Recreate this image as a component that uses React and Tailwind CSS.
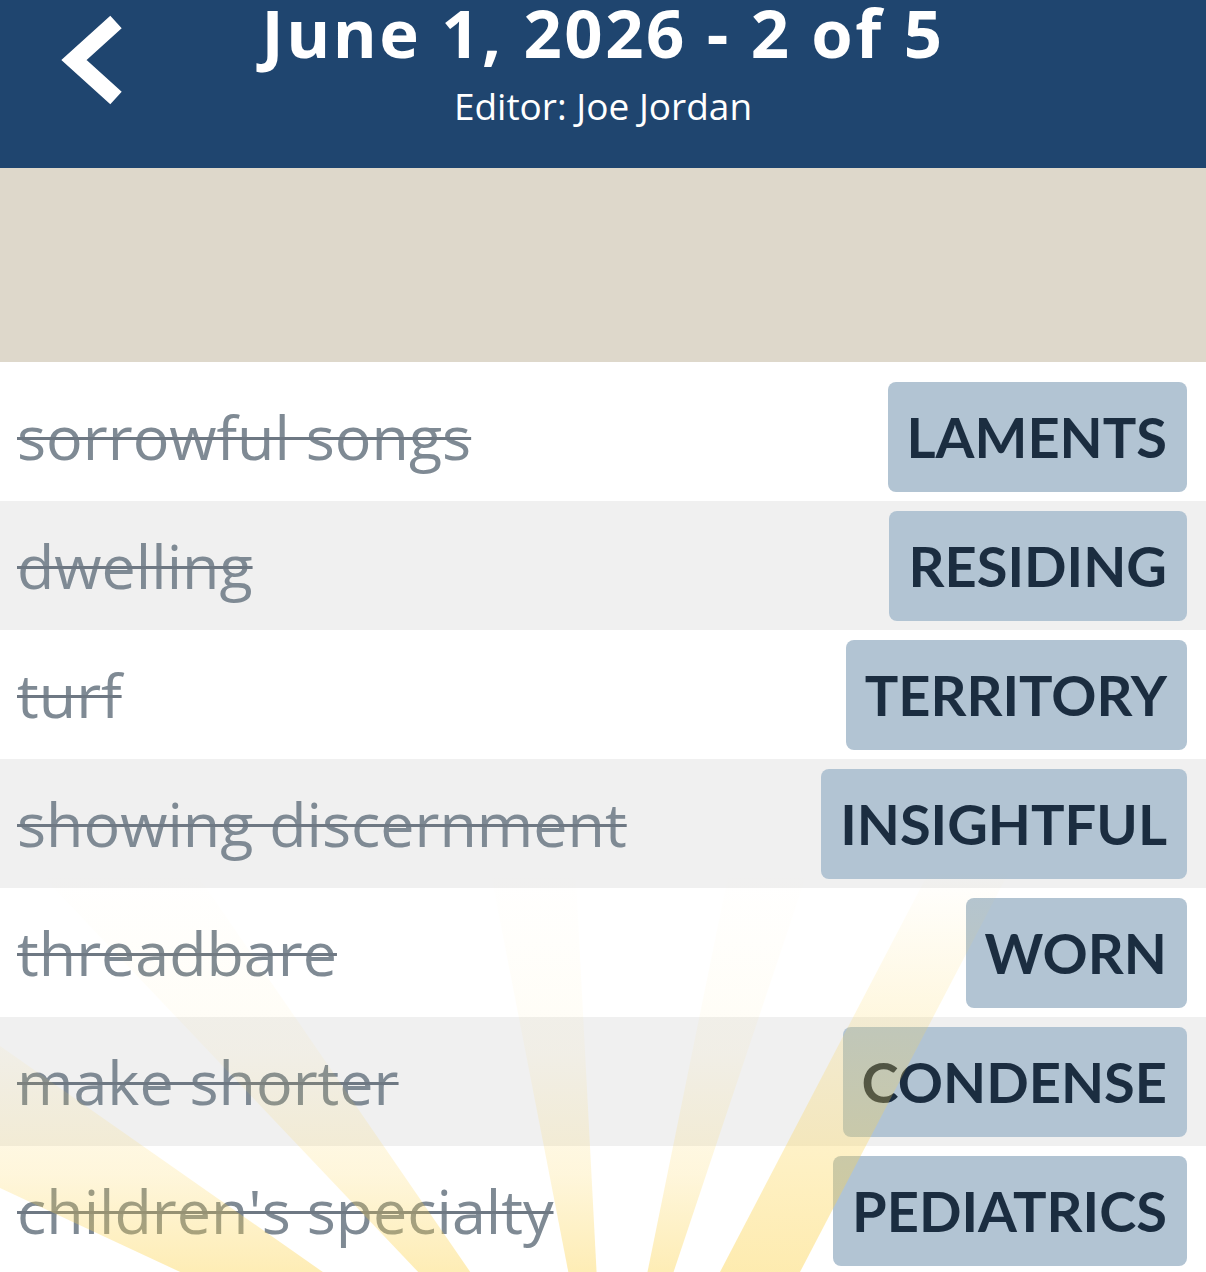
import React from 'react';

const clues = [
    { clue: 'sorrowful songs', answer: 'LAMENTS' },
    { clue: 'dwelling', answer: 'RESIDING' },
    { clue: 'turf', answer: 'TERRITORY' },
    { clue: 'showing discernment', answer: 'INSIGHTFUL' },
    { clue: 'threadbare', answer: 'WORN' },
    { clue: 'make shorter', answer: 'CONDENSE' },
    { clue: "children's specialty", answer: 'PEDIATRICS' },
];

// sun rays fanning up from a point below the list
const rays = [
    { angle: -60, spread: 5 },
    { angle: -39, spread: 4.5 },
    { angle: -7, spread: 4 },
    { angle: 15, spread: 3.5 },
];

function rayPoints(cx, cy, angle, spread) {
    const r = 1500;
    const a = ((angle - spread) * Math.PI) / 180;
    const b = ((angle + spread) * Math.PI) / 180;
    return `${cx},${cy} ${cx + r * Math.sin(a)},${cy - r * Math.cos(a)} ${cx + r * Math.sin(b)},${cy - r * Math.cos(b)}`;
}

function SunBurst() {
    const cx = 607;
    const cy = 1109;
    return (
        <svg className="absolute inset-0 w-full h-full pointer-events-none" viewBox="0 0 1206 913" preserveAspectRatio="none">
            <defs>
                <linearGradient id="rayFade" gradientUnits="userSpaceOnUse" x1="0" y1="510" x2="0" y2="913">
                    <stop offset="0" stopColor="#fcd34d" stopOpacity="0" />
                    <stop offset="0.45" stopColor="#fcd34d" stopOpacity="0.06" />
                    <stop offset="0.75" stopColor="#fcd34d" stopOpacity="0.2" />
                    <stop offset="1" stopColor="#fcd34d" stopOpacity="0.42" />
                </linearGradient>
                <linearGradient id="bigRayFade" gradientUnits="userSpaceOnUse" x1="0" y1="510" x2="0" y2="913">
                    <stop offset="0" stopColor="#fcd34d" stopOpacity="0" />
                    <stop offset="0.4" stopColor="#fcd34d" stopOpacity="0.2" />
                    <stop offset="1" stopColor="#fcd34d" stopOpacity="0.45" />
                </linearGradient>
            </defs>
            {rays.map((r, i) => (
                <polygon key={i} points={rayPoints(cx, cy, r.angle, r.spread)} fill="url(#rayFade)" />
            ))}
            <polygon points="930,508 1010,508 800,910 720,910" fill="url(#bigRayFade)" />
        </svg>
    );
}

function ClueRow({ clue, answer, shaded }) {
    return (
        <div className={`h-[129px] flex items-center justify-between pl-[17px] pr-[19px] ${shaded ? 'bg-[#f0f0f0]' : 'bg-white'}`}>
            <span className="font-['Open_Sans',sans-serif] text-[#7f8a94] text-[61px] leading-none line-through decoration-[3px] decoration-[#6e7883]">
                {clue}
            </span>
            <span className="h-[110px] flex items-center pl-[19px] pr-[20px] rounded-lg bg-[#b2c4d3] text-[#1b2d40] text-[56px] font-bold leading-none">
                {answer}
            </span>
        </div>
    );
}

export default function App() {
    return (
        <div className="w-[1206px] h-[1272px] overflow-hidden bg-white font-['Lato','Open_Sans',sans-serif]">
            <header className="h-[168px] bg-[#1f456f] relative flex flex-col items-center font-['Open_Sans',sans-serif]">
                <button className="absolute left-[51px] top-[12px] w-[80px] h-[96px] flex items-center justify-center">
                    <svg width="70" height="96" viewBox="0 0 70 96">
                        <polyline points="60,10 18,48 60,86" fill="none" stroke="#ffffff" strokeWidth="17" strokeLinejoin="miter" />
                    </svg>
                </button>
                <h1 className="text-white text-[67px] font-bold leading-[56px] tracking-[2.5px] mt-[4px]">June 1, 2026 - 2 of 5</h1>
                <p className="text-white text-[37px] leading-[40px] mt-[26px]">Editor: Joe Jordan</p>
            </header>
            <div className="h-[194px] bg-[#ded8cb]" />
            <div className="relative pt-[10px]">
                {clues.map((c, i) => (
                    <ClueRow key={c.answer} clue={c.clue} answer={c.answer} shaded={i % 2 === 1} />
                ))}
                <SunBurst />
            </div>
        </div>
    );
}
